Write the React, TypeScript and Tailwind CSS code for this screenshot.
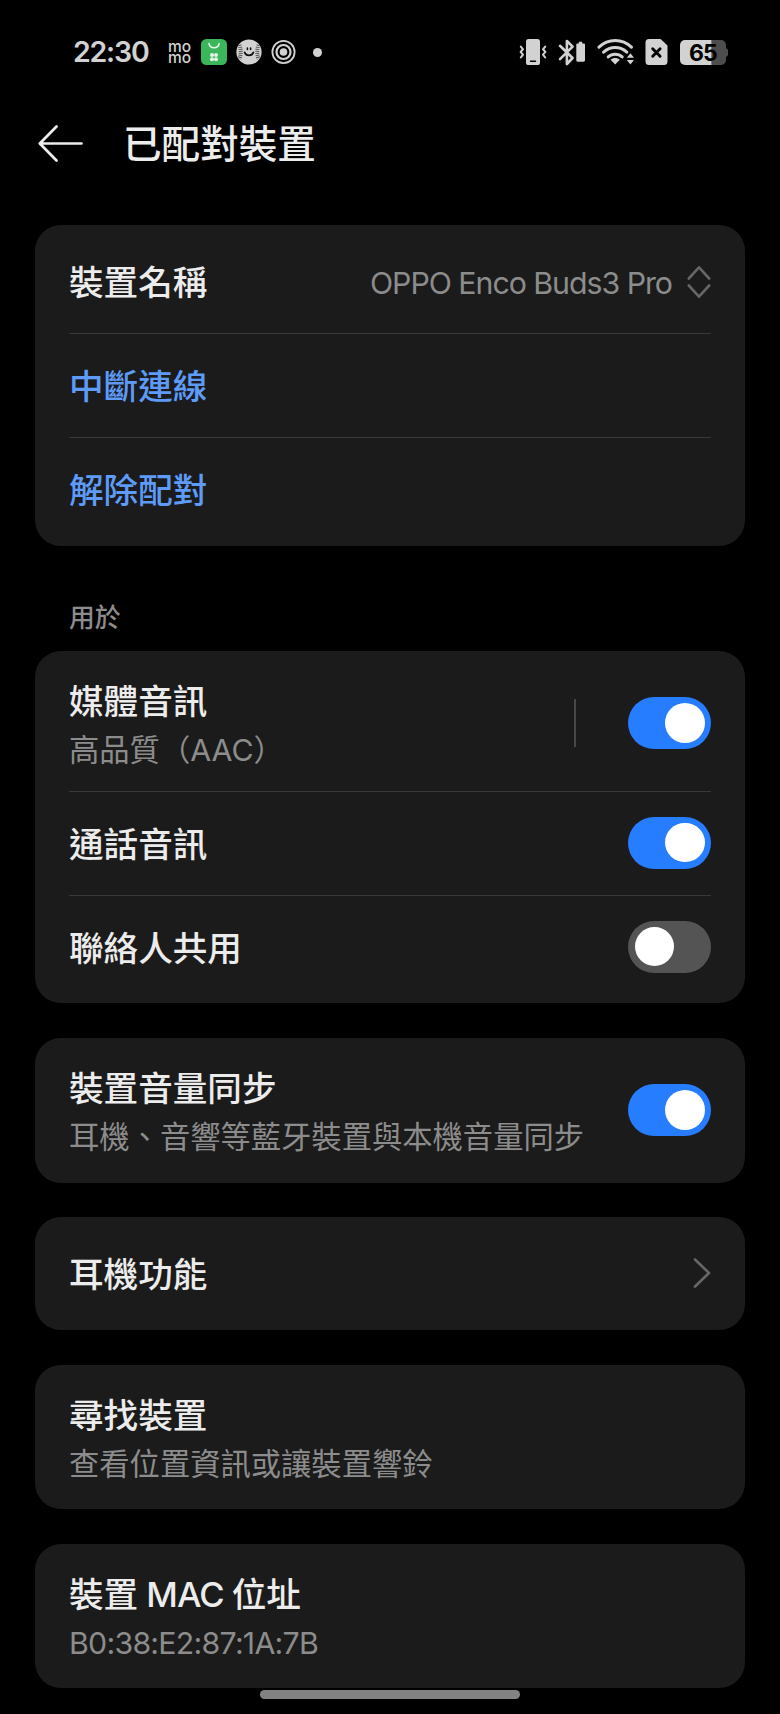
import type { ReactNode } from "react";
import clsx from "clsx";

/* ---------- Status bar icons ---------- */

function StoreIcon() {
  return (
    <svg className="ml-[9px] h-[26px] w-[26px]" viewBox="0 0 26 26" fill="none">
      <rect width="26" height="26" rx="5.5" fill="#3cb65a" />
      <path d="M8 4.6c.8 5.4 9.3 5.4 10.1 0" stroke="#e4f5e8" strokeWidth="1.5" strokeLinecap="round" />
      <g fill="#e4f5e8">
        <circle cx="11" cy="16" r="2" />
        <circle cx="15" cy="16" r="2" />
        <circle cx="11" cy="20.2" r="2" />
        <circle cx="15" cy="20.2" r="2" />
      </g>
    </svg>
  );
}

function BaseballIcon() {
  return (
    <svg className="ml-[9px] h-[26px] w-[26px]" viewBox="0 0 26 26" fill="none">
      <circle cx="13" cy="13" r="12.6" fill="#d2d2d2" />
      <path d="M3.4 6c1.8 4.500 1.800 9.500 0 14M22.600 6c-1.800 4.500-1.800 9.500 0 14" stroke="#555" strokeWidth="4" strokeDasharray="1 1" />
      <path d="M8.6 13.4c1.500 4 7.300 4 8.800 0" stroke="#111" strokeWidth="1.7" strokeLinecap="round" />
      <path d="M11.4 9v1.400M14.600 9v1.400" stroke="#111" strokeWidth="1.6" strokeLinecap="round" />
    </svg>
  );
}

function TargetIcon() {
  return (
    <svg className="ml-[9px] h-[26px] w-[25px]" viewBox="0 0 25 26" fill="none" stroke="#d2d2d2">
      <circle cx="12.5" cy="13" r="11.1" strokeWidth="1.8" />
      <circle cx="12.5" cy="13" r="7" strokeWidth="2.2" />
      <circle cx="12.5" cy="13" r="3.8" fill="#d2d2d2" stroke="none" />
    </svg>
  );
}

function VibrateIcon() {
  return (
    <svg className="h-[26px] w-7" viewBox="0 0 28 26" fill="none">
      <rect x="7" y="0" width="14" height="26" rx="2.6" fill="#d2d2d2" />
      <path d="M11.5 22.3h5" stroke="#000" strokeWidth="1.4" strokeLinecap="round" />
      <path
        d="M1.8 7.6l2.2 2.7-2.4 2.6L4 15.6l-2.2 2.9M26.2 7.6L24 10.3l2.4 2.6-2.4 2.7 2.2 2.9"
        stroke="#d2d2d2"
        strokeWidth="2"
        strokeLinecap="round"
        strokeLinejoin="round"
      />
    </svg>
  );
}

function BluetoothIcon() {
  return (
    <svg className="h-[27px] w-7" viewBox="0 0 28 27" fill="none">
      <path
        d="M2 6.8L14.6 19 8.9 25V2l5.7 5.6L2 20.2"
        stroke="#d2d2d2"
        strokeWidth="2.6"
        strokeLinecap="round"
        strokeLinejoin="round"
      />
      <path d="M20.8 2.8h3.4v1.7h1.6c.8 0 1.2.4 1.2 1.2v15.6c0 .9-.5 1.4-1.4 1.4h-5.9c-.9 0-1.4-.5-1.4-1.4V5.7c0-.8.4-1.2 1.2-1.2h1.3z" fill="#d2d2d2" />
    </svg>
  );
}

function WifiIcon() {
  return (
    <svg className="h-[26px] w-[38px]" viewBox="0 0 38 26" fill="none">
      <g stroke="#d2d2d2" strokeWidth="3" strokeLinecap="round">
        <path d="M2 8.2c9.200-8.800 23.200-8.800 32.400 0" />
        <path d="M6.600 13.200c6.600-6.200 16.600-6.200 23.200 0" />
        <path d="M11.200 17.900c4-3.700 10-3.700 14 0" />
      </g>
      <path d="M18.200 25.400l-4.600-4.600c2.600-2.500 6.600-2.500 9.200 0z" fill="#d2d2d2" />
      <path d="M33.400 14.200l3.600 4.600h-7.200zM33.400 25.600l-3.600-4.600H37z" fill="#d2d2d2" />
    </svg>
  );
}

function SimIcon() {
  return (
    <svg className="h-[26px] w-[23px]" viewBox="0 0 23 26" fill="none">
      <path d="M4 0h11.5l7 6.5v16a3.5 3.5 0 0 1-3.5 3.5H4A3.5 3.5 0 0 1 .5 22.5v-19A3.5 3.5 0 0 1 4 0z" fill="#d2d2d2" />
      <path d="M7.7 9.8l7.4 7.4M15.1 9.8l-7.4 7.4" stroke="#000" strokeWidth="2.9" strokeLinecap="round" />
    </svg>
  );
}

function BatteryIcon() {
  return (
    <div className="relative h-[25px] w-[49px]">
      <svg className="h-[25px] w-[49px]" viewBox="0 0 49 25" fill="none">
        <path d="M31.5 0H41a5 5 0 0 1 5 5v3.2c1.3.3 2 1.2 2 2.3v4c0 1.1-.7 2-2 2.3V20a5 5 0 0 1-5 5h-9.5z" fill="#4d4d4d" />
        <path d="M5 0h26.5v25H5a5 5 0 0 1-5-5V5a5 5 0 0 1 5-5z" fill="#d2d2d2" />
      </svg>
      <span className="absolute top-px left-0 w-[46px] text-center text-[23px] leading-[25px] font-bold tracking-[-0.8px] text-black">
        65
      </span>
    </div>
  );
}

function StatusBar() {
  return (
    <header className="flex h-[104px] items-center pr-[51px] pl-[73px] text-[#d2d2d2]">
      <span className="w-[95px] text-[28.5px] leading-none font-semibold tracking-[-1.2px]">22:30</span>
      <span className="w-6 text-[15.5px] leading-[11px] font-medium">
        mo
        <br />
        mo
      </span>
      <StoreIcon />
      <BaseballIcon />
      <TargetIcon />
      <span className="ml-[17px] h-[9px] w-[9px] rounded-full bg-[#d2d2d2]" />

      <div className="ml-auto flex items-center">
        <VibrateIcon />
        <div className="w-[11px]" />
        <BluetoothIcon />
        <div className="w-[11px]" />
        <WifiIcon />
        <div className="w-[10px]" />
        <SimIcon />
        <div className="w-3" />
        <BatteryIcon />
      </div>
    </header>
  );
}

/* ---------- Settings building blocks ---------- */

function Card({ children, className }: { children: ReactNode; className?: string }) {
  return <section className={clsx("rounded-[26px] bg-[#1b1b1b] px-[34px] py-1", className)}>{children}</section>;
}

interface RowProps {
  title: ReactNode;
  subtitle?: ReactNode;
  link?: boolean;
  divider?: boolean;
  children?: ReactNode;
}

function Row({ title, subtitle, link, divider, children }: RowProps) {
  return (
    <div
      className={clsx(
        "flex items-center justify-between",
        subtitle ? "h-[136px]" : "h-[104px]",
        divider && "border-t border-[#383838] pb-0.5",
      )}
    >
      <div className={clsx("whitespace-nowrap", subtitle ? "pt-1" : "pt-0.5")}>
        <div className={clsx("text-[34.6px] leading-[50px] font-medium", link ? "text-[#5e9bf8]" : "text-[#ececec]")}>
          {title}
        </div>
        {subtitle && <div className="text-[30.3px] leading-[48px] text-[#8c8c8c]">{subtitle}</div>}
      </div>
      {children}
    </div>
  );
}

function Toggle({ on = false }: { on?: boolean }) {
  return (
    <button
      role="switch"
      aria-checked={on}
      className={clsx(
        "flex h-[52px] w-[83px] shrink-0 items-center rounded-full px-[6.5px]",
        on ? "justify-end bg-[#267dff]" : "justify-start bg-[#545454]",
      )}
    >
      <span className="h-[39.5px] w-[39.5px] rounded-full bg-white" />
    </button>
  );
}

export default function App() {
  return (
    <div className="flex h-[1714px] w-[780px] flex-col overflow-hidden bg-black font-['Inter','Noto_Sans_CJK_TC',sans-serif]">
      <StatusBar />

      {/* Title bar */}
      <div className="flex h-[80px] items-center pl-[38px]">
        <svg className="h-10 w-[46px]" viewBox="0 0 46 40" fill="none" stroke="#ececec" strokeWidth="2.7" strokeLinecap="round" strokeLinejoin="round">
          <path d="M18.5 2.5L1.8 19.500l16.700 17M2 19.500h41.500" />
        </svg>
        <h1 className="ml-[39px] text-[38.6px] leading-none font-medium text-[#ececec]">已配對裝置</h1>
      </div>

      <main className="mt-[41px] px-[35px]">
        <Card className="h-[321px]">
          <Row title="裝置名稱">
            <div className="flex items-center gap-[15px] pt-0.5">
              <span className="pt-1 text-[30.3px] tracking-[-1.03px] text-[#8c8c8c]">OPPO Enco Buds3 Pro</span>
              <svg className="h-[34px] w-6" viewBox="0 0 24 34" fill="none" stroke="#666" strokeWidth="2.6" strokeLinecap="round" strokeLinejoin="round">
                <path d="M1.8 13.5L12 2.3l10.2 11.2M1.8 20.5L12 31.7l10.2-11.2" />
              </svg>
            </div>
          </Row>
          <Row title="中斷連線" link divider />
          <Row title="解除配對" link divider />
        </Card>

        <h2 className="mt-[54px] mb-[15px] h-9 pl-[34px] text-[25.8px] leading-9 font-medium text-[#8c8c8c]">用於</h2>

        <Card className="h-[352px]">
          <Row title="媒體音訊" subtitle="高品質（AAC）">
            <div className="flex items-center gap-[52px]">
              <div className="h-12 w-0.5 bg-[#484848]" />
              <Toggle on />
            </div>
          </Row>
          <Row title="通話音訊" divider>
            <Toggle on />
          </Row>
          <Row title="聯絡人共用" divider>
            <Toggle />
          </Row>
        </Card>

        <Card className="mt-[35px] h-[144.5px]">
          <Row title="裝置音量同步" subtitle="耳機、音響等藍牙裝置與本機音量同步">
            <Toggle on />
          </Row>
        </Card>

        <Card className="mt-[34.5px] h-[113px]">
          <Row title="耳機功能">
            <svg className="h-8 w-5" viewBox="0 0 20 32" fill="none" stroke="#666" strokeWidth="2.6" strokeLinecap="round" strokeLinejoin="round">
              <path d="M4 2.5L18 16 4 29.5" />
            </svg>
          </Row>
        </Card>

        <Card className="mt-[34.5px] h-[144.5px]">
          <Row title="尋找裝置" subtitle="查看位置資訊或讓裝置響鈴" />
        </Card>

        <Card className="mt-[34.5px] h-[144.5px]">
          <Row
            title={
              <>
                裝置<span className="tracking-[-1px]"> MAC </span>位址
              </>
            }
            subtitle={<span className="tracking-[-0.75px]">B0:38:E2:87:1A:7B</span>}
          />
        </Card>
      </main>

      {/* Gesture bar */}
      <div className="mx-auto mt-0.5 h-[9px] w-[260px] shrink-0 rounded-full bg-[#828282]" />
    </div>
  );
}
